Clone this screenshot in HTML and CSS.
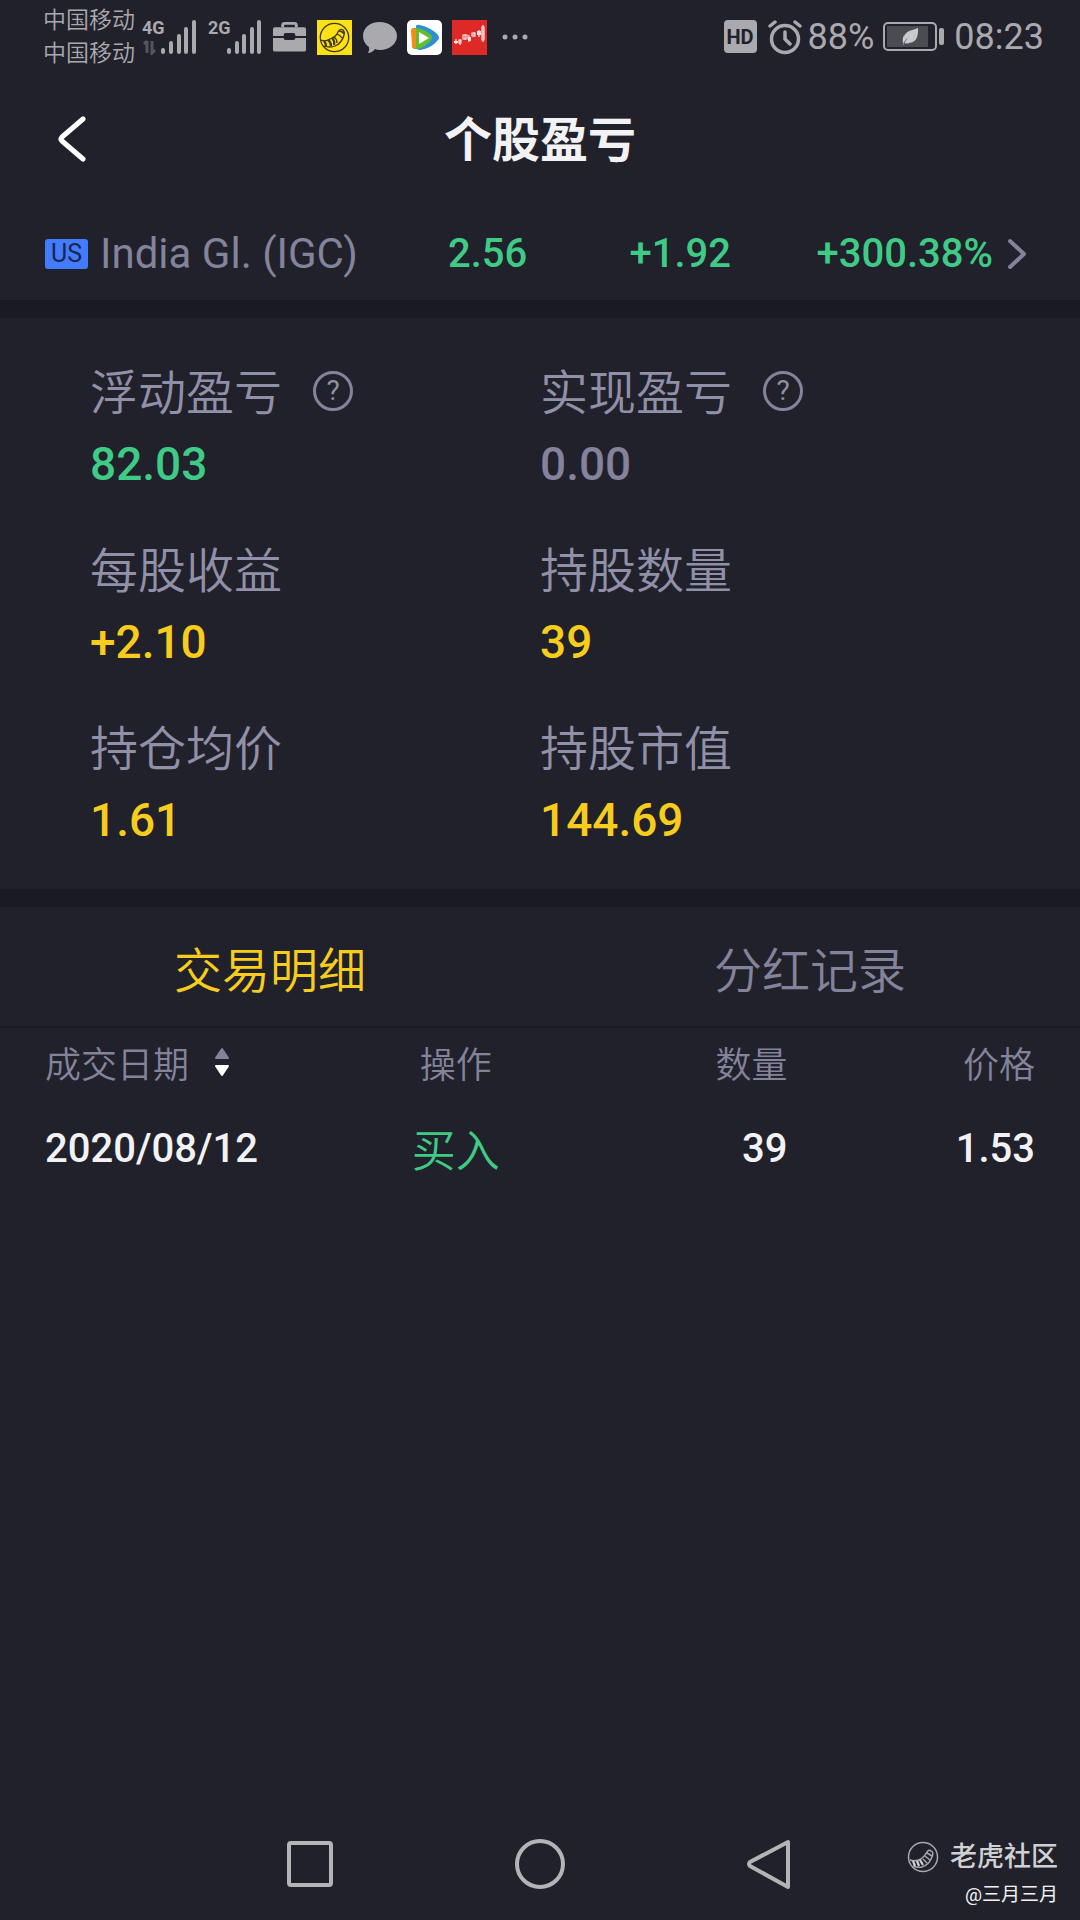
FILE: index.html
```html
<!DOCTYPE html>
<html lang="zh-CN">
<head>
<meta charset="utf-8">
<meta name="viewport" content="width=device-width, initial-scale=1">
<title>个股盈亏</title>
<link rel="stylesheet" href="styles.css">
</head>
<body>
<div class="screen">
  <div class="status">
    <div class="status-left">
      <div class="carriers"><span>中国移动</span><span>中国移动</span></div>
      <div class="status-icons">
        <div class="signal">
          <span class="net">4G</span>
          <svg width="56" height="36" viewBox="0 0 56 36">
            <path d="M6 22v12M3 25l3-3M11 22v12l3-3" fill="none" stroke="#55555e" stroke-width="3"/>
            <path d="M22 31v2M30 24v9M38 17v16M45 10v23M53 3v30" stroke="#a9a9ae" stroke-width="4" stroke-linecap="round"/>
          </svg>
        </div>
        <div class="signal">
          <span class="net">2G</span>
          <svg width="55" height="36" viewBox="0 0 55 36">
            <path d="M22 31v2M30 24v9M37 17v16M45 10v23M52 3v30" stroke="#a9a9ae" stroke-width="4" stroke-linecap="round"/>
          </svg>
        </div>
        <svg width="35" height="36" viewBox="0 0 36 36">
          <path d="M11 8V6q0-2 2-2h10q2 0 2 2v2" fill="none" stroke="#a9a9ae" stroke-width="3"/>
          <path d="M3 8h30q2 0 2 2v7H24v-1q0-2-2-2h-8q-2 0-2 2v1H1v-7q0-2 2-2zM1 19h11q0 2 2 2h8q2 0 2-2h11v12q0 2-2 2H3q-2 0-2-2z" fill="#a9a9ae"/>
        </svg>
        <svg width="35" height="35" viewBox="0 0 35 35">
          <path d="M0 0h35v35H0z" fill="#fbe116"/>
          <g fill="none" stroke="#42370b" stroke-width="1.3">
            <circle cx="17.500" cy="17.500" r="14.200"/>
            <path d="M4 20q4 2 9-1 6-2 8-7 2-4 5-2 2 2 1 5-2 8-9 11-5 2-11 0M22 11q3 0 5 3M20 14q3 1 5 4M17 17q3 2 3 6"/>
            <path d="M7 21q2 2 2 5M11 20q3 2 3 6M15 18q3 3 2 7" stroke-width="2.200"/>
          </g>
        </svg>
        <svg width="35" height="35" viewBox="0 0 35 35"><path d="M17.500 2C27 2 35 8 35 16s-8 14-17 14q-3 0-5-1-3 4-7 4 2-3 1-6-6-4-6-11C1 8 8 2 17.500 2z" fill="#a9a9ae"/></svg>
        <svg width="35" height="35" viewBox="0 0 35 35">
          <rect width="35" height="35" rx="5" fill="#fff"/>
          <path d="M9 6q1-2 4-1 12 3 18 10 2 3 0 5-6 8-18 10-3 0-4-2z" fill="#2d8fd5"/>
          <path d="M5 11q0-4 4-3 9 1 15 7 2 3 0 5-5 7-14 9-4 1-5-3z" fill="#64bd2c"/>
          <path d="M4 11q0-3 3-3l2 1v20q-4 0-4-3z" fill="#f28b1d"/>
          <path d="M12 12l10 6-10 6z" fill="#fff"/>
        </svg>
        <svg width="35" height="35" viewBox="0 0 35 35">
          <path d="M0 0h35v35H0z" fill="#de2929"/>
          <g fill="none" stroke="#ffe3df" stroke-width="1.200"><path d="M4 19v5M8 19v6M13 14v6M17 15v7M22 12v5M27 10v7M31 5v17"/><path d="M7 20h2v3H7zM11 15h4v4h-4zM20 13h3v3h-3zM30 7h2v13h-2z"/></g>
          <path d="M2 21h4v2H2zM16 17h3v4h-3zM25 11h4v4h-4z" fill="#ffe3df"/>
        </svg>
        <svg width="36" height="36" viewBox="0 0 36 36" fill="#a9a9ae"><circle cx="8" cy="18" r="2.500"/><circle cx="18" cy="18" r="2.500"/><circle cx="28" cy="18" r="2.500"/></svg>
      </div>
    </div>
    <div class="status-right">
      <svg width="38" height="36" viewBox="0 0 38 36"><rect y="1" width="33" height="33" rx="4" fill="#a9a9ae"/><text class="hd" x="16" y="25" text-anchor="middle">HD</text></svg>
      <svg width="34" height="36" viewBox="0 0 34 36" fill="none" stroke="#a9a9ae" stroke-width="3.500" stroke-linecap="round"><circle cx="17" cy="20" r="13.500"/><path d="M17 13v7l5 5M2 7l5-4M32 7l-5-4"/></svg>
      <span>88%</span>
      <svg width="68" height="36" viewBox="0 0 68 36"><rect x="4" y="4" width="52" height="27" rx="4" fill="none" stroke="#a9a9ae" stroke-width="2"/><path d="M7 7h41v21H7z" fill="#4b4b52"/><rect x="59" y="9" width="5" height="17" rx="2" fill="#a9a9ae"/><path d="M38 9q1 14-9 15-2 1-4 0l-2 2q-2-10 6-14 4-1 9-3zM24 25q3-7 9-10-7 4-10 10z" fill="#c9c9cc"/></svg>
      <span>08:23</span>
    </div>
  </div>

  <header class="header">
    <button class="back" type="button" aria-label="返回"><svg width="30" height="46" viewBox="0 0 30 46" fill="none" stroke="#fff" stroke-width="5" stroke-linecap="round" stroke-linejoin="round"><path d="M26 3L5 21q-2 2 0 4l21 18"/></svg></button>
    <h1 class="title">个股盈亏</h1>
  </header>

  <a class="stock" href="#stock">
    <span class="stock-name"><span class="market">US</span>India Gl. (IGC)</span>
    <span class="up">2.56</span>
    <span class="up right">+1.92</span>
    <span class="stock-pct up">+300.38%<svg width="20" height="32" viewBox="0 0 20 32" fill="none" stroke="#83839c" stroke-width="4" stroke-linecap="round" stroke-linejoin="round"><path d="M3 3l14 13L3 29"/></svg></span>
  </a>

  <dl class="stats">
    <div class="stat"><dt>浮动盈亏<button class="help" type="button" aria-label="浮动盈亏说明">?</button></dt><dd class="up">82.03</dd></div>
    <div class="stat"><dt>实现盈亏<button class="help" type="button" aria-label="实现盈亏说明">?</button></dt><dd class="flat">0.00</dd></div>
    <div class="stat"><dt>每股收益</dt><dd>+2.10</dd></div>
    <div class="stat"><dt>持股数量</dt><dd>39</dd></div>
    <div class="stat"><dt>持仓均价</dt><dd>1.61</dd></div>
    <div class="stat"><dt>持股市值</dt><dd>144.69</dd></div>
  </dl>

  <div class="tabs" role="tablist">
    <button class="tab active" type="button" role="tab" aria-selected="true">交易明细</button>
    <button class="tab" type="button" role="tab" aria-selected="false">分红记录</button>
  </div>

  <div class="records">
    <table>
      <thead>
        <tr>
          <th class="date" scope="col"><button class="sort" type="button">成交日期<svg width="16" height="30" viewBox="0 0 16 30" stroke-width="2" stroke-linejoin="round"><path d="M8 2l6 9H2z" fill="#83839c" stroke="#83839c"/><path d="M8 28l6-9H2z" fill="#fff" stroke="#fff"/></svg></button></th>
          <th class="action" scope="col">操作</th>
          <th class="amount" scope="col">数量</th>
          <th class="price" scope="col">价格</th>
        </tr>
      </thead>
      <tbody>
        <tr><td class="date">2020/08/12</td><td class="action buy">买入</td><td class="amount">39</td><td class="price">1.53</td></tr>
      </tbody>
    </table>
  </div>

  <nav class="nav">
    <button type="button" aria-label="最近任务"><svg width="50" height="52" viewBox="0 0 50 52"><rect x="3" y="5" width="42" height="42" rx="2"/></svg></button>
    <button type="button" aria-label="主屏幕"><svg width="50" height="52" viewBox="0 0 50 52"><circle cx="25" cy="26" r="23"/></svg></button>
    <button type="button" aria-label="返回上一级"><svg width="50" height="52" viewBox="0 0 50 52"><path d="M44 4v45L6 28q-2-2 0-4z"/></svg></button>
  </nav>

  <div class="watermark">
    <div class="brand">
      <svg width="32" height="32" viewBox="0 0 32 32" fill="none" stroke="#a6a6ab" stroke-width="1.500"><circle cx="16" cy="16" r="14.500"/><path d="M3 19q6 2 11-1 4-3 6-7 2-3 4-1 3 1 1 6-3 8-10 10-5 1-9-1M20 12l5 3M18 15l5 4M16 18l4 4"/><path d="M6 20l2 5M10 20l2 5M13 19l3 5" stroke="#d0d0d3" stroke-width="2.200"/></svg>
      老虎社区
    </div>
    <div class="author">@三月三月</div>
  </div>
</div>
</body>
</html>
```
FILE: styles.css
```css
* { box-sizing: border-box; }

body {
  margin: 0;
  background: #21212b;
  color: #f2f2f5;
  font-family: Roboto, "Noto Sans CJK SC", sans-serif;
}

button {
  padding: 0;
  border: 0;
  background: none;
  color: inherit;
  font: inherit;
}

svg { display: block; flex: none; }

.screen {
  position: relative;
  display: flex;
  flex-direction: column;
  min-height: 100vh;
}

/* System status bar */
.status {
  display: flex;
  justify-content: space-between;
  align-items: center;
  height: 74px;
  padding: 0 36px 0 43px;
  color: #a9a9ae;
}

.status-left,
.status-right {
  display: flex;
  align-items: center;
  gap: 6px;
}

.status-right { font-size: 36px; }

.status-icons {
  display: flex;
  align-items: center;
  gap: 10px;
}

.carriers {
  display: flex;
  flex-direction: column;
  font-size: 23px;
  font-weight: 350;
  line-height: 33px;
}

.signal { position: relative; }

/* Network type sits over the empty corner of the signal bars */
.net {
  position: absolute;
  top: -2px;
  left: 1px;
  font-size: 18px;
  font-weight: 700;
  line-height: 22px;
}

.hd { font-size: 20px; font-weight: 700; fill: #21212b; }

/* Title bar */
.header {
  display: grid;
  grid-template-columns: 1fr auto 1fr;
  align-items: center;
  height: 129px;
  padding: 0 57px;
}

.title {
  margin: 0;
  padding-top: 5px;
  font-size: 48px;
  font-weight: 700;
  line-height: 56px;
}

.back { justify-self: start; }

/* Stock summary */
.stock {
  display: grid;
  grid-template-columns: 403fr 142fr 141fr 304fr;
  align-items: center;
  height: 97px;
  padding: 4px 45px 0;
  color: #83839c;
  font-size: 40px;
  line-height: 48px;
  text-decoration: none;
  white-space: nowrap;
}

.stock-name {
  display: flex;
  align-items: center;
  gap: 12px;
  font-size: 42px;
}

.market {
  padding: 0 6px;
  border-radius: 3px;
  background: #437bfd;
  color: #1a2550;
  font-size: 25px;
  line-height: 30px;
}

.stock > .up { font-weight: 500; }
.up { color: #3fcb86; }
.right { text-align: right; }

.stock-pct {
  display: flex;
  justify-content: flex-end;
  align-items: center;
  gap: 14px;
  padding-right: 8px;
}

/* Position figures */
.stats {
  display: grid;
  grid-template-columns: 1fr 1fr;
  row-gap: 50px;
  margin: 0;
  padding: 46px 90px 41px;
  border-top: 18px solid #1a1a23;
  border-bottom: 18px solid #1a1a23;
}

.stat {
  display: flex;
  flex-direction: column;
  gap: 14px;
  line-height: 56px;
}

dt {
  display: flex;
  align-items: center;
  gap: 31px;
  padding-top: 2px;
  color: #9090a8;
  font-size: 48px;
  font-weight: 350;
}

dd {
  margin: 0;
  color: #f6cd1c;
  font-size: 46px;
  font-weight: 500;
}

.stat .up { color: #3fcb86; }
.stat .flat { color: #83839c; }

.help {
  width: 40px;
  height: 40px;
  margin-bottom: 6px;
  border: 3px solid #83839c;
  border-radius: 50%;
  color: #9090a0;
  font-size: 28px;
  font-weight: 400;
  line-height: 34px;
}

/* Tabs */
.tabs {
  display: grid;
  grid-template-columns: 1fr 1fr;
  height: 121px;
  border-bottom: 2px solid #191921;
}

.tab {
  color: #83839c;
  font-size: 48px;
  font-weight: 350;
}

.tab.active { color: #f6cd1c; }

/* Trade records */
.records {
  flex: 1;
  padding: 0 45px;
}

table {
  width: 100%;
  border-collapse: collapse;
  table-layout: fixed;
}

th {
  height: 68px;
  padding: 0;
  color: #83839c;
  font-size: 36px;
  font-weight: 350;
}

td {
  height: 104px;
  padding: 0;
  font-size: 40px;
  font-weight: 500;
}

.date { width: 29%; text-align: left; }
.action { width: 25%; text-align: center; }
.amount { width: 21%; text-align: right; }
.price { width: 25%; text-align: right; }

.sort {
  display: flex;
  align-items: center;
  gap: 25px;
}

.buy {
  color: #3fcb86;
  font-size: 44px;
  font-weight: 350;
}

/* System navigation */
.nav {
  display: flex;
  justify-content: center;
  align-items: center;
  gap: 179px;
  height: 112px;
}

.nav svg {
  fill: none;
  stroke: #b4b4b7;
  stroke-width: 4;
  stroke-linejoin: round;
}

/* Community watermark over the page corner */
.watermark {
  position: absolute;
  right: 22px;
  bottom: 11px;
  display: flex;
  flex-direction: column;
  align-items: flex-end;
  gap: 6px;
  color: #f2f2f5;
}

.brand {
  display: flex;
  align-items: center;
  gap: 11px;
  color: #d0d0d3;
  font-size: 27px;
  font-weight: 500;
  line-height: 36px;
}

.author {
  font-size: 19px;
  line-height: 28px;
}
```
